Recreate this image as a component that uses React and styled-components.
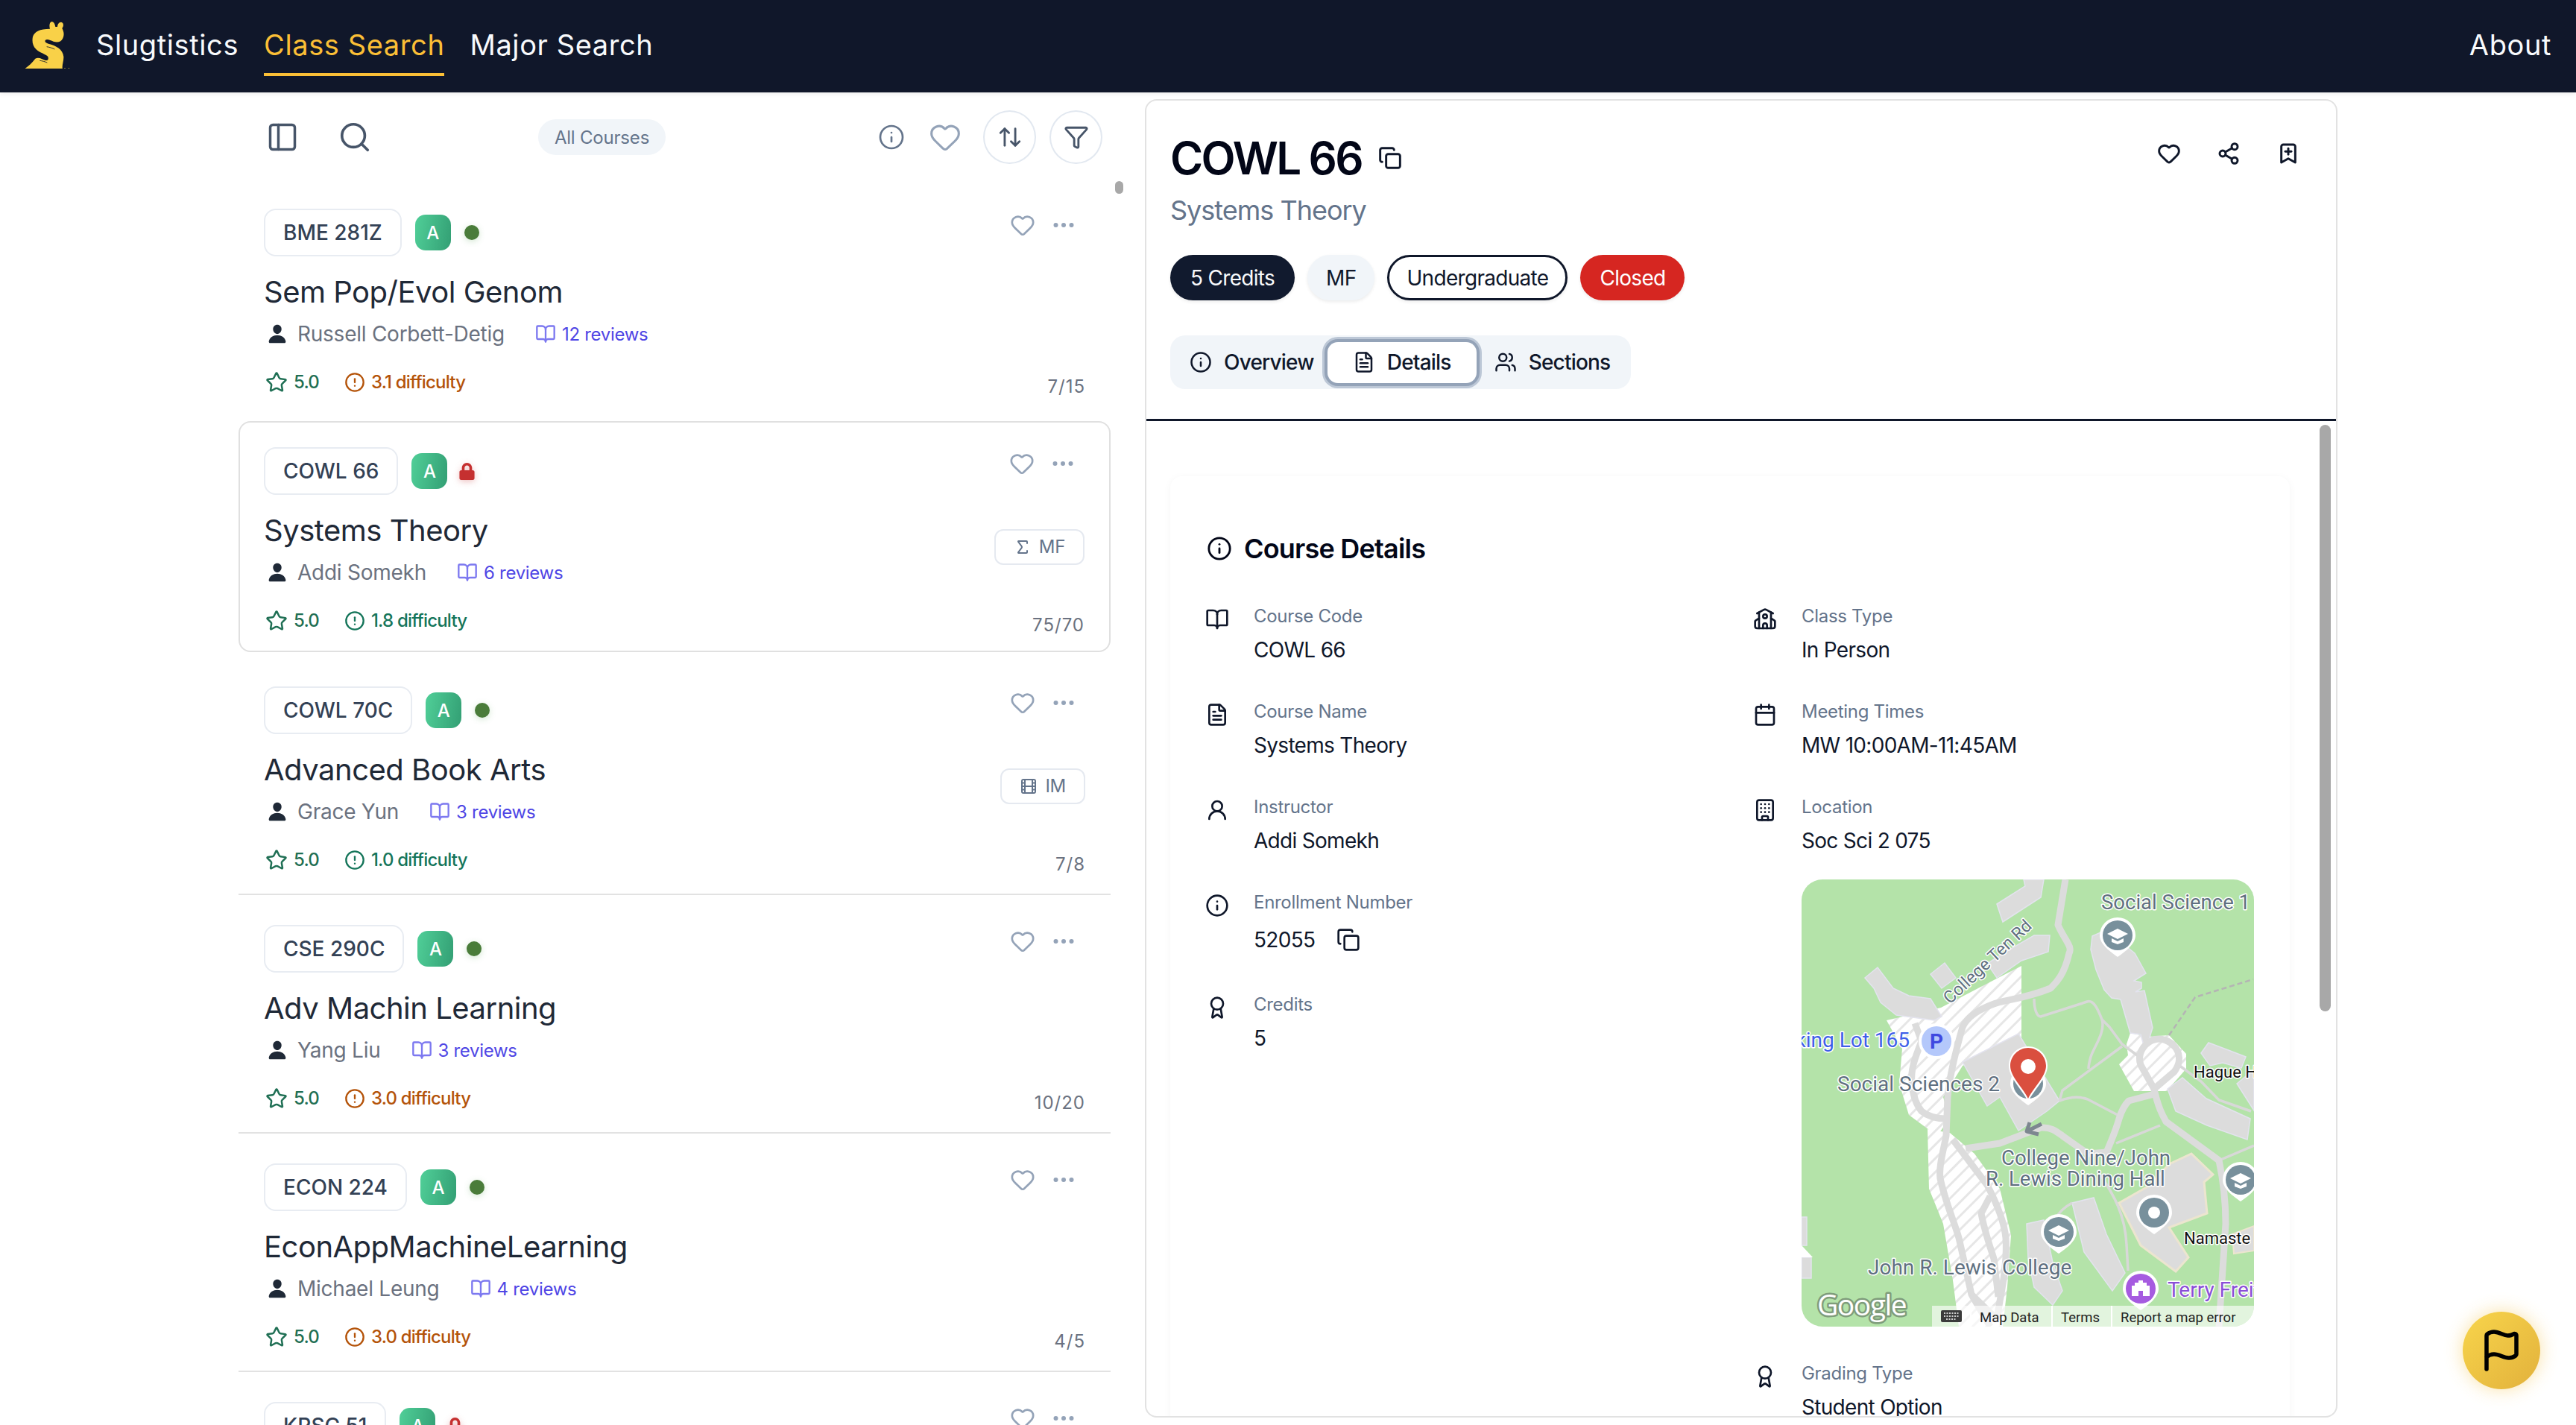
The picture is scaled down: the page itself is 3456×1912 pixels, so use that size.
import React from 'react'
import styled, { createGlobalStyle } from 'styled-components'
import {
  PanelLeft, Search, Info, Heart, ArrowUpDown, Funnel, Ellipsis, BookOpen, Star, CircleAlert,
  Sigma, Film, Copy, Share2, BookmarkPlus, FileText, Users, UserRound, Award, School, Calendar,
  Building, Flag,
} from 'lucide-react'
import { IoPerson } from 'react-icons/io5'
import { FaLock } from 'react-icons/fa'

const GlobalStyle = createGlobalStyle`
  html, body { margin: 0; padding: 0; background: #fff; }
  body { font-family: Inter, "Noto Sans", sans-serif; color: #0f172a; }
  * { box-sizing: border-box; }
`

const Page = styled.div`
  width: 3456px;
  height: 1912px;
  display: flex;
  flex-direction: column;
  overflow: hidden;
  position: relative;
`

const Header = styled.header`
  height: 124px;
  flex: none;
  background: #10172a;
  display: flex;
  align-items: center;
  padding: 0 33px 0 32px;
  box-shadow: 0 2px 6px rgba(0, 0, 0, 0.08);
  z-index: 2;
`

const LogoMark = styled.svg`
  width: 62px;
  height: 64px;
  flex: none;
  margin: -4px 35px 0 0;
`

const NavItems = styled.nav`
  display: flex;
  gap: 34px;
  align-items: center;
`

const NavItem = styled.span`
  font-size: 38px;
  letter-spacing: 0.6px;
  line-height: 44px;
  margin-top: -4px;
  color: ${p => (p.$active ? '#fbbf36' : '#f8fafc')};
  position: relative;
  &::after {
    content: ${p => (p.$active ? '""' : 'none')};
    position: absolute;
    left: 0;
    right: 0;
    bottom: -20px;
    height: 4px;
    background: #fbbf36;
  }
`

const AboutLink = styled(NavItem)`
  margin-left: auto;
`

const Main = styled.main`
  flex: 1;
  min-height: 0;
  display: flex;
  gap: 46px;
  padding: 9px 0 10px 320px;
`

const ListColumn = styled.section`
  width: 1170px;
  flex: none;
  display: flex;
  flex-direction: column;
  position: relative;
  margin-bottom: -10px;
`

const ListThumb = styled.div`
  position: absolute;
  left: 1176px;
  top: 110px;
  width: 11px;
  height: 17px;
  border-radius: 6px;
  background: #a8a8a8;
`

const Toolbar = styled.div`
  height: 107px;
  flex: none;
  display: flex;
  align-items: center;
  padding: 0 11px 5px 37px;
  color: #475569;
`

const ToolbarGroup = styled.div`
  display: flex;
  align-items: center;
  gap: ${p => p.$gap}px;
`

const Pill = styled.span`
  margin-left: 223px;
  width: 171px;
  height: 48px;
  border-radius: 24px;
  background: #f1f5f9;
  color: #64748b;
  font-size: 24px;
  letter-spacing: -0.2px;
  display: flex;
  align-items: center;
  justify-content: center;
`

const ToolbarRight = styled.div`
  margin-left: auto;
  display: flex;
  align-items: center;
`

const RoundButton = styled.span`
  width: 71px;
  height: 72px;
  border-radius: 50%;
  border: 2px solid #e2e8f0;
  display: flex;
  align-items: center;
  justify-content: center;
  margin-left: ${p => p.$left}px;
  color: #475569;
`

const List = styled.div`
  flex: 1;
  min-height: 0;
  overflow: hidden;
`

const Card = styled.article`
  height: 320px;
  padding: 40px 34px 0;
  display: flex;
  flex-direction: column;
  background: #fff;
  border-bottom: 2px solid ${p => (p.$noRule ? 'transparent' : '#e2e2e2')};
  ${p => p.$selected && `
    height: 310px;
    margin: 5px 0 6px;
    border: 2px solid #e0e0e0;
    border-radius: 16px;
    padding: 33px 33px 0 32px;
  `}
`

const CardTop = styled.div`
  display: flex;
  align-items: center;
  height: 64px;
  flex: none;
`

const CodeChip = styled.span`
  height: 64px;
  padding: 0 24px;
  border: 2px solid #e8ecf2;
  border-radius: 16px;
  font-size: 28px;
  font-weight: 500;
  color: #334155;
  display: flex;
  align-items: center;
`

const Grade = styled.span`
  width: 48px;
  height: 48px;
  margin-left: 18px;
  border-radius: 14px;
  background: linear-gradient(100deg, #50cf98, #339f74);
  color: #fff;
  font-size: 24px;
  font-weight: 500;
  display: flex;
  align-items: center;
  justify-content: center;
`

const OpenDot = styled.span`
  width: 20px;
  height: 20px;
  margin-left: 18px;
  border-radius: 50%;
  background: #4a7c3a;
  box-shadow: 0 2px 8px rgba(74, 160, 70, 0.25);
`

const LockBadge = styled.span`
  margin-left: 15px;
  display: flex;
  color: #c53030;
  filter: drop-shadow(0 2px 4px rgba(197, 48, 48, 0.3));
`

const CardActions = styled.div`
  margin-left: auto;
  display: flex;
  align-items: center;
  gap: 20px;
  margin-top: -20px;
  padding-right: 11px;
  color: #94a3b8;
`

const CardBody = styled.div`
  display: flex;
  justify-content: space-between;
  align-items: flex-start;
  margin-top: 22px;
  height: 118px;
  flex: none;
`

const CardText = styled.div`
  display: flex;
  flex-direction: column;
`

const CardTitle = styled.h3`
  margin: 0;
  font-size: 40px;
  line-height: 52px;
  font-weight: 400;
  color: #1f2937;
  letter-spacing: -0.5px;
`

const MetaRow = styled.div`
  display: flex;
  align-items: center;
  height: 44px;
  margin-top: 8px;
  padding-left: 4px;
`

const PersonName = styled.span`
  font-size: 28px;
  letter-spacing: -0.25px;
  color: #6b7280;
  margin-left: 13px;
`

const Reviews = styled.span`
  display: flex;
  align-items: center;
  gap: 8px;
  margin-left: 41px;
  font-size: 24px;
  letter-spacing: -0.3px;
  color: #4f46e5;
  svg { color: #7c78f0; }
`

const SessionTag = styled.span`
  height: 48px;
  padding: 0 24px;
  margin-top: 7px;
  border: 2px solid #e5e9f0;
  border-radius: 12px;
  display: flex;
  align-items: center;
  justify-content: center;
  gap: 10px;
  font-size: 24px;
  letter-spacing: -0.3px;
  color: #64748b;
  align-self: center;
  margin-bottom: 30px;
`

const StatsRow = styled.div`
  display: flex;
  justify-content: space-between;
  align-items: center;
  margin-top: 8px;
`

const StatsLeft = styled.div`
  display: flex;
  align-items: center;
  padding-left: 2px;
`

const Stat = styled.span`
  display: flex;
  align-items: center;
  gap: 8px;
  font-size: 24px;
  font-weight: 500;
  letter-spacing: -0.8px;
  margin-right: 34px;
  color: ${p => p.$color};
`

const Count = styled.span`
  font-size: 24px;
  color: #6b7280;
  letter-spacing: 1px;
  padding-top: 12px;
`

const DetailPanel = styled.section`
  width: 1600px;
  flex: none;
  border: 2px solid #e2e2e2;
  border-radius: 16px;
  display: flex;
  flex-direction: column;
  overflow: hidden;
  position: relative;
`

const DetailHead = styled.div`
  height: 430px;
  flex: none;
  border-bottom: 3px solid #0f172a;
  padding: 37px 34px 0 32px;
  display: flex;
  flex-direction: column;
  position: relative;
`

const TitleRow = styled.div`
  display: flex;
  align-items: center;
  gap: 22px;
  height: 80px;
`

const DetailTitle = styled.h1`
  margin: 0;
  font-size: 60px;
  line-height: 80px;
  font-weight: 600;
  letter-spacing: -2.8px;
  color: #020617;
`

const HeadActions = styled.div`
  position: absolute;
  right: 48px;
  top: 55px;
  display: flex;
  gap: 48px;
  color: #0f172a;
`

const Subtitle = styled.div`
  font-size: 36px;
  line-height: 44px;
  letter-spacing: -1px;
  color: #64748b;
  margin-top: 8px;
`

const Badges = styled.div`
  display: flex;
  gap: 17px;
  margin-top: 38px;
`

const Badge = styled.span`
  height: 61px;
  padding: 0 ${p => p.$pad}px;
  border-radius: 31px;
  font-size: 28px;
  letter-spacing: -0.7px;
  display: flex;
  align-items: center;
  background: ${p => p.$bg};
  color: ${p => p.$color};
  border: ${p => (p.$outline ? '3px solid #0f172a' : 'none')};
  box-shadow: 0 2px 4px rgba(0, 0, 0, 0.08);
`

const Tabs = styled.div`
  display: inline-flex;
  align-self: flex-start;
  align-items: center;
  height: 72px;
  margin-top: 47px;
  padding: 0 28px 0 26px;
  border-radius: 20px;
  background: #f1f5f9;
`

const Tab = styled.span`
  display: flex;
  align-items: center;
  gap: 16px;
  font-size: 28px;
  font-weight: 500;
  letter-spacing: -0.8px;
  color: #0f172a;
`

const ActiveTab = styled(Tab)`
  width: 200px;
  height: 55px;
  margin: 0 24px 0 18px;
  justify-content: center;
  gap: 16px;
  border-radius: 14px;
  background: #fff;
  box-shadow: 0 0 0 4px #94a3b8, 0 0 0 7px #bcc7d6;
`

const DetailBody = styled.div`
  flex: 1;
  min-height: 0;
  overflow: hidden;
  position: relative;
  padding: 74px 62px 0 32px;
`

const BodyThumb = styled.div`
  position: absolute;
  right: 7px;
  top: 5px;
  width: 15px;
  height: 787px;
  border-radius: 8px;
  background: #a8a8a8;
`

const InfoCard = styled.div`
  border-radius: 16px;
  padding: 73px 48px 60px 47px;
  box-shadow: 0 2px 12px rgba(15, 23, 42, 0.04);
  background: #fff;
`

const InfoHeading = styled.h2`
  margin: 0;
  display: flex;
  align-items: center;
  gap: 16px;
  padding-left: 2px;
  font-size: 36px;
  line-height: 48px;
  font-weight: 600;
  letter-spacing: -0.8px;
  color: #020617;
`

const InfoGrid = styled.div`
  display: grid;
  grid-template-columns: 1fr 1fr;
  column-gap: 64px;
  margin-top: 49px;
`

const FieldColumn = styled.div`
  display: flex;
  flex-direction: column;
  gap: 45px;
`

const Field = styled.div`
  display: flex;
  gap: 33px;
  color: #0f172a;
`

const FieldIcon = styled.span`
  display: flex;
  flex: none;
  padding-top: 6px;
`

const FieldText = styled.div`
  flex: 1;
  min-width: 0;
`

const FieldLabel = styled.div`
  font-size: 24px;
  line-height: 36px;
  letter-spacing: -0.3px;
  color: #64748b;
`

const FieldValue = styled.div`
  font-size: 28px;
  line-height: 40px;
  letter-spacing: -0.7px;
  margin-top: 7px;
  color: #0f172a;
  display: flex;
  align-items: center;
  gap: 29px;
  min-height: ${p => (p.$tall ? 49 : 40)}px;
`

const MapFrame = styled.div`
  width: 607px;
  height: 600px;
  margin-top: 32px;
  border-radius: 28px;
  overflow: hidden;
`

const MapSvg = styled.svg`
  display: block;
  width: 607px;
  height: 600px;
  font-family: Roboto, "Liberation Sans", sans-serif;
`

const FlagButton = styled.button`
  position: absolute;
  left: 3304px;
  top: 1760px;
  width: 104px;
  height: 104px;
  border: 0;
  padding: 0;
  border-radius: 50%;
  background: linear-gradient(135deg, #f8d54b, #e2b13c);
  box-shadow: 0 0 24px rgba(245, 190, 60, 0.45);
  color: #000;
  display: flex;
  align-items: center;
  justify-content: center;
`

const courses = [
  { code: 'BME 281Z', title: 'Sem Pop/Evol Genom', who: 'Russell Corbett-Detig', reviews: '12 reviews', diff: '3.1', hard: true, count: '7/15', noRule: true },
  { code: 'COWL 66', title: 'Systems Theory', who: 'Addi Somekh', reviews: '6 reviews', diff: '1.8', count: '75/70', closed: true, selected: true, tag: 'MF' },
  { code: 'COWL 70C', title: 'Advanced Book Arts', who: 'Grace Yun', reviews: '3 reviews', diff: '1.0', count: '7/8', tag: 'IM' },
  { code: 'CSE 290C', title: 'Adv Machin Learning', who: 'Yang Liu', reviews: '3 reviews', diff: '3.0', hard: true, count: '10/20' },
  { code: 'ECON 224', title: 'EconAppMachineLearning', who: 'Michael Leung', reviews: '4 reviews', diff: '3.0', hard: true, count: '4/5' },
  { code: 'KRSC 51', closed: true },
]

const CourseCard = ({ course }) => (
  <Card $selected={course.selected} $noRule={course.noRule}>
    <CardTop>
      <CodeChip>{course.code}</CodeChip>
      <Grade>A</Grade>
      {course.closed ? <LockBadge><FaLock size={23} /></LockBadge> : <OpenDot />}
      <CardActions>
        <Heart size={34} strokeWidth={1.9} />
        <Ellipsis size={36} strokeWidth={2} />
      </CardActions>
    </CardTop>
    {course.title && (
      <>
        <CardBody>
          <CardText>
            <CardTitle>{course.title}</CardTitle>
            <MetaRow>
              <IoPerson size={28} color="#1f2937" />
              <PersonName>{course.who}</PersonName>
              <Reviews><BookOpen size={28} strokeWidth={2} />{course.reviews}</Reviews>
            </MetaRow>
          </CardText>
          {course.tag && (
            <SessionTag>
              {course.tag === 'MF' ? <Sigma size={24} /> : <Film size={24} />}
              {course.tag}
            </SessionTag>
          )}
        </CardBody>
        <StatsRow>
          <StatsLeft>
            <Stat $color="#1f6f54"><Star size={30} strokeWidth={2} />5.0</Stat>
            <Stat $color={course.hard ? '#b45309' : '#15755a'}>
              <CircleAlert size={28} strokeWidth={2} />{course.diff} difficulty
            </Stat>
          </StatsLeft>
          <Count>{course.count}</Count>
        </StatsRow>
      </>
    )}
  </Card>
)

const LogoIcon = () => (
  <LogoMark viewBox="36 36 186 192">
    <path
      fill="#f9d148"
      d="M141 68C138 58 138 42 148 39C158 40 161 50 163 60C166 60 168 60 171 60C172 50 176 41 186 41C196 43 198 55 190 66C198 80 199 95 192 108C185 122 170 124 155 119C145 115 130 108 123 113C118 120 125 125 135 128C165 135 193 150 196 180C197 200 188 215 192 230L38 230C52 220 70 205 82 188C95 180 110 190 122 195C132 197 137 190 133 180C125 170 100 165 85 150C72 138 68 120 72 100C78 80 100 68 141 68Z"
    />
    <path fill="none" stroke="#f9d148" strokeWidth="3" d="M198 228H204M214 228H220" />
    <path fill="none" stroke="#10172a" strokeWidth="2.5" d="M100 196C110 197 120 200 130 204M128 140C140 142 152 146 160 150" />
  </LogoMark>
)

// map drawing, coordinates are px inside the 607x600 frame
const buildings = [
  '262,33 300,9 298,0 325,0 321,24 270,57',
  '249,113 274,97 312,75 333,75 331,97 295,109 262,132',
  '173,127 192,112 207,132 188,146',
  '85,132 102,118 123,146 144,156 173,160 188,184 178,189 127,182 106,165 97,146',
  '390,76 408,68 447,99 462,126 446,136 456,138 456,146 448,151 460,149 471,199 465,218 458,219 455,208 441,206 428,161 416,159 406,148 395,121 388,94',
  '216,245 291,207 346,297 329,311 291,337 266,292 249,304',
  '363,434 392,427 409,476 434,528 417,552 379,500',
  '302,462 325,457 337,514 350,552 337,571 312,547 304,509',
  '491,281 511,266 543,294 602,321 598,349 544,330 502,311',
  '536,233 546,219 570,228 596,238 590,253 565,246 548,250',
  '0,453 7,453 7,491 0,491',
  '0,507 13,507 13,535 0,535',
  '584,274 607,255 607,310',
]

const parking = [
  '114,189 187,172 258,135 295,116 295,212 216,250 190,292 198,321 182,344 144,316 131,274 135,227',
  '169,335 199,340 232,368 266,415 281,477 276,547 270,600 211,600 203,538 190,462 171,415',
  '441,206 465,211 493,209 516,234 516,254 490,284 446,284 426,248 438,236 436,221',
]

const roads = [
  'M354 0L344 61C352 80 364 90 359 99C352 130 340 140 334 146C300 160 270 162 258 167C236 175 222 185 216 198C204 240 198 270 196 292L194 344C190 365 184 385 186 401C192 430 205 460 211 481C220 520 224 540 228 557L253 600',
  'M152 193L161 217C152 240 146 255 148 274C150 295 156 305 161 311C172 320 184 321 194 321',
  'M203 349L249 410C262 435 272 460 274 481C276 510 270 545 266 566L262 590',
  'M253 425L241 448C245 470 252 490 258 509L264 560',
  'M220 361L266 354L321 333C335 332 342 338 350 344L384 368L409 366C416 350 422 335 426 321C430 308 434 302 439 297L473 288',
  'M473 281C478 305 484 316 489 325L560 377C566 405 569 435 569 462L560 600',
  'M473 281L455 249C450 235 458 222 470 216C482 211 494 216 502 226C510 238 506 250 500 258L473 281',
  'M228 557L262 590',
]

const paths = [
  'M312 160C312 175 316 184 321 184L383 164C392 161 398 175 403 188C408 205 392 225 388 238C386 245 385 250 385 254',
  'M403 188L413 198L430 221L453 238',
  'M430 224L350 283L346 297',
  'M346 297C365 290 375 292 384 295L424 316',
  'M481 330L422 354',
  'M506 249L536 271L560 296L603 311',
  'M363 434C352 440 345 447 341 455',
  'M400 395C420 425 434 450 436 490L438 525',
  'M560 377L607 357',
  'M290 348L266 354',
]

const TeardropMarker = ({ x, y, fill = '#78909c', children }) => (
  <g transform={`translate(${x} ${y})`}>
    <path fill="#fff" d="M-24 0A24 24 0 1 1 24 0C24 12 10 22 0 29C-10 22 -24 12 -24 0Z" />
    <circle r="20" fill={fill} />
    {children}
  </g>
)

const Cap = () => (
  <g fill="#fff">
    <path d="M-14 -2L0 -9L14 -2L0 5Z" />
    <path d="M-8 4L0 8L8 4V9L0 12L-8 9Z" />
  </g>
)

const haloText = { paintOrder: 'stroke', stroke: '#fff', strokeWidth: 3, strokeLinejoin: 'round' }

const CampusMap = () => (
  <MapSvg viewBox="0 0 607 600">
    <defs>
      <pattern id="lot" width="13" height="13" patternUnits="userSpaceOnUse" patternTransform="rotate(-45)">
        <rect width="13" height="13" fill="#fff" />
        <rect width="13" height="3" fill="#e6e6e6" />
      </pattern>
    </defs>
    <rect width="607" height="600" fill="#b4e3a9" />
    {parking.map(p => <polygon key={p} points={p} fill="url(#lot)" />)}
    <polygon
      points="493,382 523,368 552,396 540,406 544,448 493,467 519,507 502,526 455,491 426,434 468,410"
      fill="#dcdcdc"
      stroke="#ece5cf"
      strokeWidth="3"
    />
    <polygon points="578,476 607,465 607,498 580,502" fill="#dcdcdc" stroke="#ece5cf" strokeWidth="2" />
    {buildings.map(p => <polygon key={p} points={p} fill="#dcdcdc" stroke="#e3e3ee" strokeWidth="1.5" />)}
    <path d="M0 491L15 507H0Z" fill="#fff" />
    {paths.map(d => <path key={d} d={d} fill="none" stroke="#d8d8d8" strokeWidth="3.5" />)}
    {roads.map(d => <path key={d} d={d} fill="none" stroke="#dcdcdc" strokeWidth="9" strokeLinejoin="round" />)}
    <path d="M493 209L528 158L606 134" fill="none" stroke="#b4b4b4" strokeWidth="2.5" strokeDasharray="7 4" />
    <path d="M322 328L302 338L306 326M302 338L318 342" fill="none" stroke="#7d8790" strokeWidth="5" strokeLinejoin="round" />

    <text x="402" y="40" fontSize="27.5" fill="#5f7080" style={haloText}>Social Science 1</text>
    <text x="199" y="168" fontSize="23" fill="#5f7080" transform="rotate(-43 199 168)" style={haloText}>College Ten Rd</text>
    <text x="145" y="225" textAnchor="end" fontSize="28" fill="#3f5fe8" style={haloText}>Parking Lot 165</text>
    <text x="48" y="284" fontSize="28" fill="#5f7080" style={haloText}>Social Sciences 2</text>
    <text x="268" y="383" fontSize="27.5" fill="#5f7080" style={haloText}>College Nine/John</text>
    <text x="247" y="411" fontSize="27.5" fill="#5f7080" style={haloText}>R. Lewis Dining Hall</text>
    <text x="89" y="530" fontSize="28" fill="#5f7080" style={haloText}>John R. Lewis College</text>
    <text x="526" y="266" fontSize="22" fill="#111" style={haloText}>Hague Hall</text>
    <text x="513" y="489" fontSize="22" fill="#111" style={haloText}>Namaste</text>
    <text x="491" y="560" fontSize="28" fill="#8a4fd6" style={haloText}>Terry Freitas</text>

    <circle cx="181" cy="217" r="24" fill="#fff" />
    <circle cx="181" cy="217" r="20" fill="#b4c8fb" />
    <text x="181" y="227" textAnchor="middle" fontSize="28" fontWeight="700" fill="#3f49e0">P</text>

    <TeardropMarker x={424} y={75}><Cap /></TeardropMarker>
    <TeardropMarker x={589} y={403}><Cap /></TeardropMarker>
    <TeardropMarker x={345} y={473}><Cap /></TeardropMarker>
    <TeardropMarker x={473} y={447}><circle r="8" fill="#fff" /></TeardropMarker>
    <TeardropMarker x={455} y={549} fill="#a65be0">
      <path fill="#fff" d="M-3 -11H3V-8H8V-4H12V10H-12V-4H-8V-8H-3ZM-3 3V10H3V3Z" />
    </TeardropMarker>

    <TeardropMarker x={304} y={274}><Cap /></TeardropMarker>
    <path fill="#fff" d="M304 224C289 224 278 236 278 250C278 266 296 282 304 298C312 282 330 266 330 250C330 236 319 224 304 224Z" />
    <path fill="#da4f3f" d="M304 226C291 226 280 237 280 250C280 265 297 279 304 294C311 279 328 265 328 250C328 237 317 226 304 226Z" />
    <circle cx="304" cy="251" r="10" fill="#fff" />

    <text
      x="21"
      y="585"
      fontSize="39"
      fontWeight="500"
      fontFamily='"Open Sans", sans-serif'
      fill="#fff"
      stroke="#7f9c7b"
      strokeWidth="5"
      letterSpacing="-1.5"
      style={{ paintOrder: 'stroke', strokeLinejoin: 'round' }}
    >
      Google
    </text>

    <rect x="175" y="572" width="432" height="28" fill="#fff" opacity="0.62" />
    <rect x="187" y="578" width="28" height="16" rx="2" fill="#3b3b3b" />
    <path d="M191 582H211M191 586H211M194 590H208" stroke="#fff" strokeWidth="1.5" strokeDasharray="2 1.5" />
    <g stroke="#fff" strokeWidth="2">
      <path d="M227 572V600M336 572V600M416 572V600" />
    </g>
    <text x="239" y="594" fontSize="18.5" fill="#222">Map Data</text>
    <text x="348" y="594" fontSize="18.5" fill="#222">Terms</text>
    <text x="428" y="594" fontSize="18.5" fill="#222">Report a map error</text>
  </MapSvg>
)

const InfoField = ({ icon: Icon, label, children, tall }) => (
  <Field>
    <FieldIcon><Icon size={32} strokeWidth={2} /></FieldIcon>
    <FieldText>
      <FieldLabel>{label}</FieldLabel>
      <FieldValue $tall={tall}>{children}</FieldValue>
    </FieldText>
  </Field>
)

export default function App() {
  return (
    <Page>
      <GlobalStyle />
      <Header>
        <LogoIcon />
        <NavItems>
          <NavItem>Slugtistics</NavItem>
          <NavItem $active>Class Search</NavItem>
          <NavItem>Major Search</NavItem>
        </NavItems>
        <AboutLink>About</AboutLink>
      </Header>
      <Main>
        <ListColumn>
          <Toolbar>
            <ToolbarGroup $gap={52}>
              <PanelLeft size={44} strokeWidth={1.9} />
              <Search size={46} strokeWidth={1.9} />
            </ToolbarGroup>
            <Pill>All Courses</Pill>
            <ToolbarRight>
              <ToolbarGroup $gap={32}>
                <Info size={36} strokeWidth={1.8} color="#64748b" />
                <Heart size={44} strokeWidth={1.7} color="#94a3b8" />
              </ToolbarGroup>
              <RoundButton $left={29}><ArrowUpDown size={34} strokeWidth={2} /></RoundButton>
              <RoundButton $left={18}><Funnel size={34} strokeWidth={2} /></RoundButton>
            </ToolbarRight>
          </Toolbar>
          <ListThumb />
          <List>
            {courses.map(c => <CourseCard key={c.code} course={c} />)}
          </List>
        </ListColumn>
        <DetailPanel>
          <DetailHead>
            <TitleRow>
              <DetailTitle>COWL 66</DetailTitle>
              <Copy size={32} strokeWidth={2.2} />
            </TitleRow>
            <HeadActions>
              <Heart size={32} strokeWidth={2.2} />
              <Share2 size={32} strokeWidth={2.2} />
              <BookmarkPlus size={32} strokeWidth={2.2} />
            </HeadActions>
            <Subtitle>Systems Theory</Subtitle>
            <Badges>
              <Badge $pad={27} $bg="#111a2e" $color="#f8fafc">5 Credits</Badge>
              <Badge $pad={25} $bg="#f1f5f9" $color="#0f172a">MF</Badge>
              <Badge $pad={23} $bg="#fff" $color="#0f172a" $outline>Undergraduate</Badge>
              <Badge $pad={26} $bg="#d62621" $color="#fff">Closed</Badge>
            </Badges>
            <Tabs>
              <Tab><Info size={30} strokeWidth={2} />Overview</Tab>
              <ActiveTab><FileText size={30} strokeWidth={2} />Details</ActiveTab>
              <Tab><Users size={30} strokeWidth={2} />Sections</Tab>
            </Tabs>
          </DetailHead>
          <DetailBody>
            <BodyThumb />
            <InfoCard>
              <InfoHeading><Info size={34} strokeWidth={2} />Course Details</InfoHeading>
              <InfoGrid>
                <FieldColumn>
                  <InfoField icon={BookOpen} label="Course Code">COWL 66</InfoField>
                  <InfoField icon={FileText} label="Course Name">Systems Theory</InfoField>
                  <InfoField icon={UserRound} label="Instructor">Addi Somekh</InfoField>
                  <InfoField icon={Info} label="Enrollment Number" tall>
                    52055 <Copy size={32} strokeWidth={2} />
                  </InfoField>
                  <InfoField icon={Award} label="Credits">5</InfoField>
                </FieldColumn>
                <FieldColumn>
                  <InfoField icon={School} label="Class Type">In Person</InfoField>
                  <InfoField icon={Calendar} label="Meeting Times">MW 10:00AM-11:45AM</InfoField>
                  <Field>
                    <FieldIcon><Building size={32} strokeWidth={2} /></FieldIcon>
                    <FieldText>
                      <FieldLabel>Location</FieldLabel>
                      <FieldValue>Soc Sci 2 075</FieldValue>
                      <MapFrame><CampusMap /></MapFrame>
                    </FieldText>
                  </Field>
                  <InfoField icon={Award} label="Grading Type">Student Option</InfoField>
                </FieldColumn>
              </InfoGrid>
            </InfoCard>
          </DetailBody>
        </DetailPanel>
      </Main>
      <FlagButton><Flag size={60} strokeWidth={2.2} /></FlagButton>
    </Page>
  )
}
